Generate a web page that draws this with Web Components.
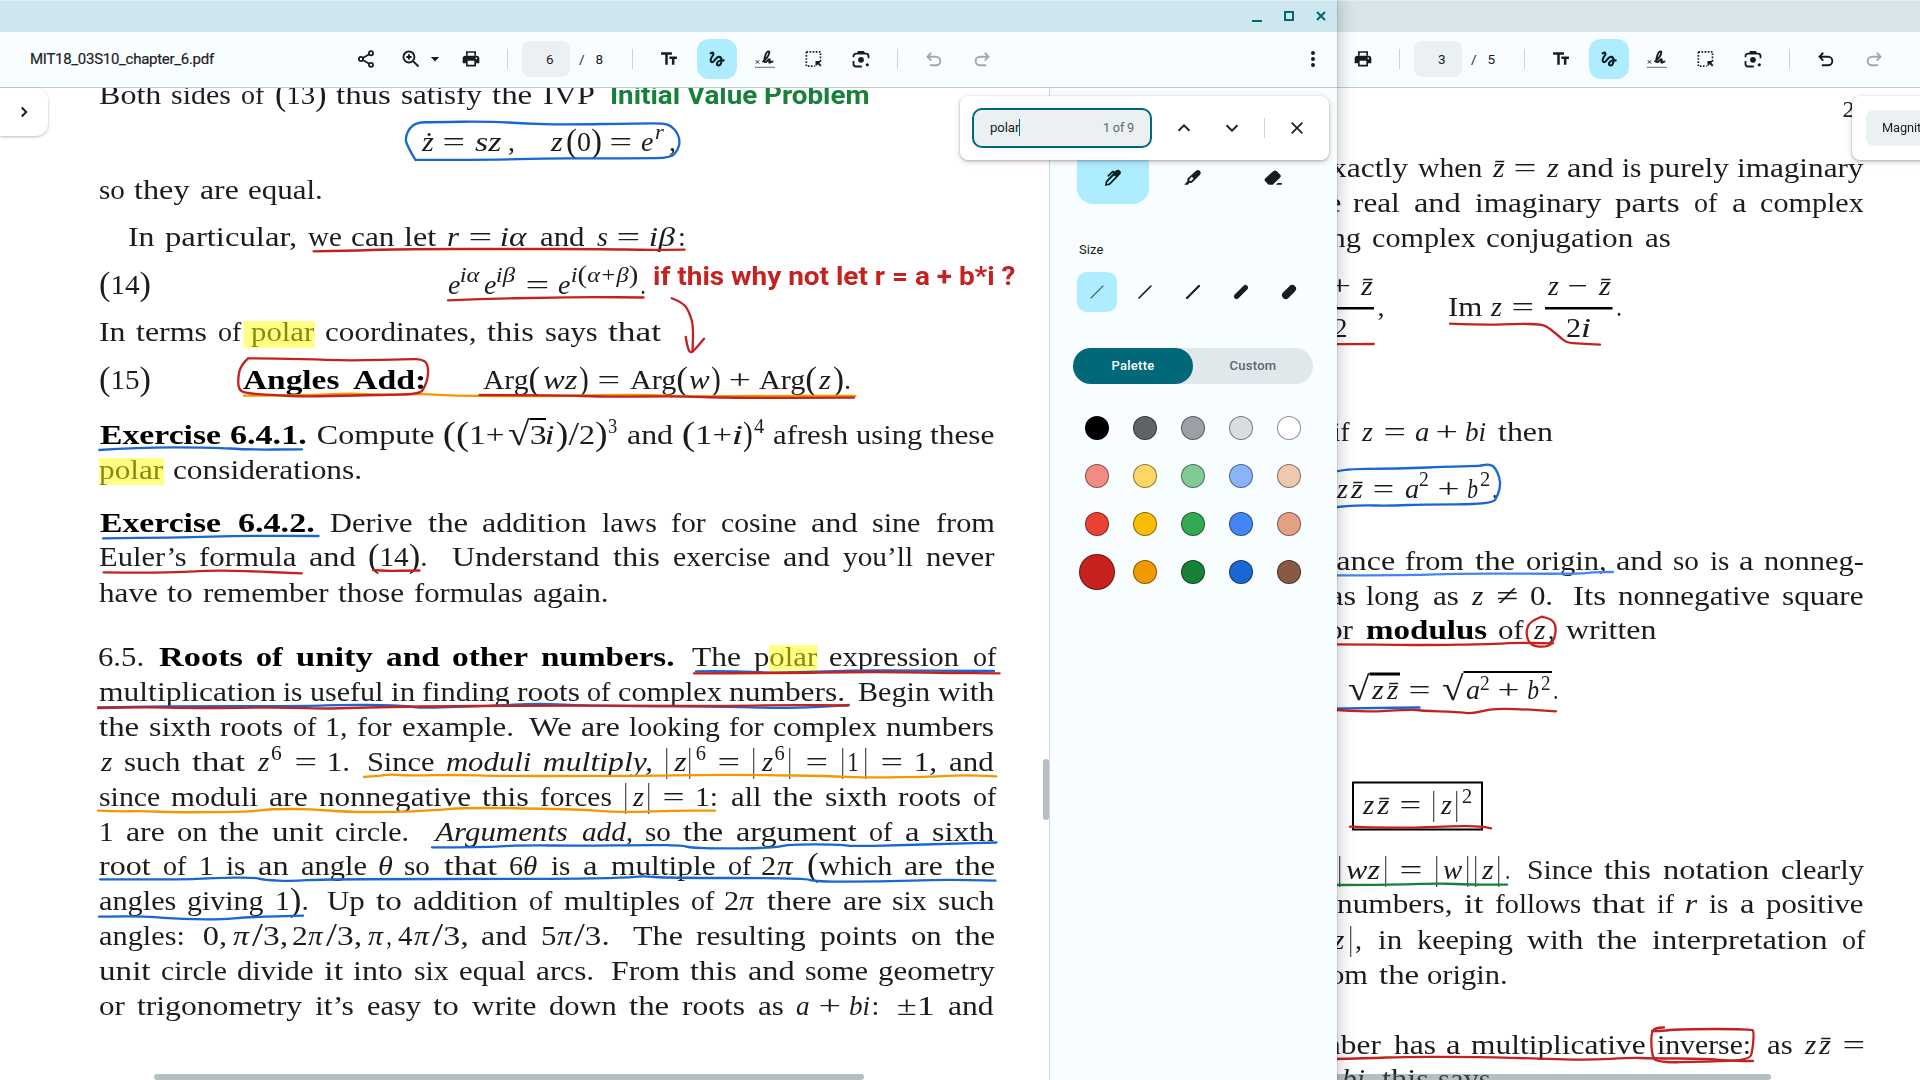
<!DOCTYPE html>
<html lang="en">
<head>
<meta charset="utf-8">
<title>MIT18_03S10_chapter_6.pdf</title>
<style>
html,body{margin:0;height:100%;overflow:hidden;background:#fff}
body{font-family:Roboto,"Liberation Sans",sans-serif;color:#191c1d}
</style>
</head>
<body>
<desk-top></desk-top>
<script>
const define=(name,html,init)=>{
  const t=document.createElement('template');t.innerHTML=html;
  customElements.define(name,class extends HTMLElement{
    connectedCallback(){
      if(this.shadowRoot)return;
      this.attachShadow({mode:'open'}).append(t.content.cloneNode(true));
      if(init)init.call(this,this.shadowRoot);
    }
  });
};

/* ---------- icons ---------- */
const ICONS={
share:'<g fill="none" stroke="currentColor" stroke-width="2.1"><circle cx="18" cy="5" r="2.5"/><circle cx="6" cy="12" r="2.5"/><circle cx="18" cy="19" r="2.5"/><path d="M8.2 10.7 15.8 6.3M8.2 13.3l7.6 4.4"/></g>',
zoom:'<g fill="none" stroke="currentColor" stroke-width="2.3"><circle cx="9.5" cy="9.5" r="6.6"/><path d="M14.2 14.2 21 21M9.5 6.3v6.4M6.3 9.5h6.4"/></g>',
print:'<path d="M19 8H5c-1.66 0-3 1.34-3 3v6h4v4h12v-4h4v-6c0-1.66-1.34-3-3-3zm-3 11H8v-5h8v5zm2.4-6.700c-.6 0-1-.45-1-1s.4-1 1-1 1 .45 1 1-.4 1-1 1z"/><path d="M6 2.600h12V8H6zM8 4.600V8h8V4.600z" fill-rule="evenodd"/>',
text:'<path d="M2.500 4v3h5v12h3V7h5V4h-13zm19 5h-9v3h3v7h3v-7h3V9z"/>',
draw:'<path d="M4.590 6.890c.7-.71 1.400-1.350 1.710-1.220.5.2 0 1.030-.3 1.520-.25.420-2.860 3.890-2.860 6.310 0 1.280.480 2.340 1.340 2.980.750.560 1.740.730 2.640.460 1.070-.310 1.950-1.400 3.060-2.770 1.210-1.490 2.830-3.440 4.080-3.440 1.630 0 1.650 1.010 1.760 1.790-3.780.640-5.380 3.670-5.380 5.370s1.440 3.090 3.210 3.090c1.630 0 4.290-1.330 4.690-6.100H21v-2.500h-2.470c-.150-1.650-1.090-4.200-4.030-4.200-2.250 0-4.180 1.910-4.940 2.840-.580.730-2.060 2.480-2.290 2.720-.250.300-.680.840-1.110.840-.450 0-.720-.830-.360-1.920.350-1.090 1.400-2.860 1.850-3.520.780-1.140 1.300-1.920 1.300-3.280C8.950 3.690 7.310 3 6.440 3 5.120 3 3.970 4 3.720 4.250c-.360.360-.660.660-.880.930l1.750 1.710zm9.290 11.660c-.310 0-.740-.260-.740-.720 0-.600.730-2.200 2.870-2.760-.300 2.690-1.430 3.480-2.130 3.480z"/>',
sign:'<g fill="none" stroke="currentColor"><path d="M1 13.500l4 4M5 13.500l-4 4" stroke-width="1.200"/><path d="M9 15.500c4-3 8.500-8.500 8.200-11.600-.1-1.600-2-1.400-3.300.6-2 3-3.300 8.200-2.500 10.500.7 1.700 2.300.5 3.400-1 1-1.500 2.500-2.300 3-1.300.5 1.200-1.600 2.600-.7 3.500 1 .7 2.500-1.300 4.900-1.300" stroke-width="2.200"/><path d="M.5 22h23" stroke-width="1.500" stroke-dasharray="1.200 1.200"/></g>',
select:'<path d="M4 3.500v17h10" fill="none" stroke="currentColor" stroke-width="2" stroke-dasharray="2 1.750"/><path d="M4 3.500h17v11" fill="none" stroke="currentColor" stroke-width="2" stroke-dasharray="2 1.750"/><path d="M15 14.500h7l-2.400 2.200 2.600 2.700-1.700 1.700-2.700-2.700-2.800 2.500z"/>',
lens:'<g fill="none" stroke="currentColor" stroke-width="2.200"><path d="M3 10V8.500a3 3 0 0 1 3-3h12a3 3 0 0 1 3 3V11"/><path d="M3 14.500V18a3 3 0 0 0 3 3h7"/></g><path d="M8.500 2.500h7l1.500 3H7zM12 9.500a3.500 3.500 0 1 0 0 7 3.500 3.500 0 0 0 0-7z"/><circle cx="19.500" cy="19" r="1.900"/>',
undo:'<path d="M7 19.500h7.500a5 5 0 0 0 0-10.200H5M8.700 4.500 4.200 9.200l4.500 4.700" fill="none" stroke="currentColor" stroke-width="2.300"/>',
redo:'<path d="M17 19.500H9.500a5 5 0 0 1 0-10.200H19M15.300 4.500l4.500 4.700-4.500 4.700" fill="none" stroke="currentColor" stroke-width="2.300"/>',
more:'<circle cx="12" cy="4.900" r="2.400"/><circle cx="12" cy="12" r="2.400"/><circle cx="12" cy="19.100" r="2.400"/>',
caret:'<path d="M2 7h20L12 18z"/>',
right:'<path d="M9 6l6 6-6 6" fill="none" stroke="currentColor" stroke-width="2.600"/>',
up:'<path d="M5.500 15.300 12 8.800l6.500 6.500" fill="none" stroke="currentColor" stroke-width="2.200"/>',
down:'<path d="M5.500 8.700 12 15.200l6.500-6.500" fill="none" stroke="currentColor" stroke-width="2.200"/>',
close:'<path d="M5.600 5.600l12.800 12.800M18.400 5.600 5.600 18.400" fill="none" stroke="currentColor" stroke-width="2"/>',
pen:'<path d="M14.300 3.800 16 2.600c1.400-.9 3-.7 4.200.3 1.400 1.200 1.700 3 .6 4.500L8.300 20.300 3 21.400c-.5.1-.8-.2-.7-.7L3.500 15.500 12.300 6.400l-.6-.6-5.100 4.900L5 9.200l5.500-5.300c.8-.7 1.700-.7 2.400 0zM5.300 16.700l-.6 2.400 2.400-.6 7.900-7.900-1.700-1.700z" fill-rule="evenodd"/>',
marker:'<path d="M15.800 3.200c1.500-1.300 3.300-1 4.500.3 1.300 1.300 1.400 3.100.1 4.500l-8.700 8.900c-1.100 1.100-2.600 1.300-4 .8L5.800 20H1.500l4-4.300c-.6-1.400-.3-2.900.8-4zM8 13.100c-.8.8-.6 1.500 0 2.100s1.400.8 2.100.1l2.600-2.600-2.200-2.200z" fill-rule="evenodd"/>',
eraser:'<path d="M12.300 3.800 2.600 12.500c-1 .9-1 2.200-.1 3.200l3.200 3.500c.4.500 1 .8 1.700.8h4.300l8.900-8.600c1-.9 1-2.300.1-3.300l-4.100-4.200c-1.200-1.100-3-1.200-4.300-.1zM17.500 18h5v2h-7z"/>'
};
define('ui-icon','<style>:host{display:block;width:20px;height:20px;flex:none}svg{display:block;width:100%;height:100%;fill:currentColor}</style><svg viewBox="0 0 24 24"></svg>',function(r){
  r.querySelector('svg').innerHTML=ICONS[this.getAttribute('name')];
});
define('tool-button',`<style>
:host{display:grid;place-items:center;width:40px;height:40px;flex:none;border-radius:12px;color:#191c1d}
:host([active]){background:#aeecff;color:#001f26}
:host([disabled]){color:#a3a9ab}
</style><slot></slot>`);

define('title-bar',`<style>
:host{display:flex;height:32px;box-sizing:border-box;justify-content:flex-end;align-items:center;background:var(--frame);border-top:1px solid #ffffff50}
</style><slot></slot>`);

define('pdf-toolbar',`<style>
:host{display:flex;height:56px;box-sizing:border-box;align-items:center;background:#f8fdff;border-bottom:1px solid #c4cccf;padding-bottom:1px;white-space:nowrap}
.name{width:316px;padding-left:30px;font-size:15px;font-weight:500;letter-spacing:-.28px;font-family:Roboto,sans-serif;color:#1f2325}
.name b{font-weight:400;display:inline-block;-webkit-text-stroke:.2px currentColor}
.sep{width:1px;height:20px;background:#cdd4d7;flex:none}
.page{width:48px;height:36px;border-radius:8px;background:#ebf0f3;flex:none;display:flex;align-items:center;box-sizing:border-box;padding-left:24px;font-size:13.500px}
.of{width:41px;display:flex;gap:11px;padding-left:9px;font-size:13.500px;flex:none}
.caret{width:10px;height:10px}
.m{margin-left:8px}
.grow{flex:1}
</style>
<div class="name"></div>
<tool-button><ui-icon name="share"></ui-icon></tool-button>
<tool-button style="margin-left:5px"><ui-icon name="zoom"></ui-icon></tool-button>
<ui-icon class="caret" name="caret" style="margin-left:-1px"></ui-icon>
<tool-button style="margin-left:11px"><ui-icon name="print"></ui-icon></tool-button>
<div class="sep" style="margin-left:16px"></div>
<div class="page" style="margin-left:14px"></div>
<div class="of"><span>/</span><span class="n"></span></div>
<div class="sep" style="margin-left:12px"></div>
<tool-button style="margin-left:16px"><ui-icon name="text"></ui-icon></tool-button>
<tool-button class="m" active><ui-icon name="draw"></ui-icon></tool-button>
<tool-button class="m"><ui-icon name="sign"></ui-icon></tool-button>
<tool-button class="m"><ui-icon name="select"></ui-icon></tool-button>
<tool-button class="m"><ui-icon name="lens"></ui-icon></tool-button>
<div class="sep" style="margin-left:16px"></div>
<tool-button class="undo" style="margin-left:16px"><ui-icon name="undo"></ui-icon></tool-button>
<tool-button class="m" disabled><ui-icon name="redo"></ui-icon></tool-button>
<div class="grow"></div>
<slot></slot>`,function(r){
  const a=n=>this.getAttribute(n)||'';
  r.querySelector('.name').innerHTML='<b>'+a('name')+'</b>';
  r.querySelector('.page').textContent=a('page');
  r.querySelector('.n').textContent=a('pages');
  if(this.hasAttribute('clean'))r.querySelector('.undo').setAttribute('disabled','');
});

define('find-bar',`<style>
:host{display:flex;align-items:center;box-sizing:border-box;width:369px;height:64px;padding-left:12px;background:#fff;border-radius:8px;box-shadow:0 1px 3px #0004,0 2px 6px 1px #0000001c;font-size:13.200px;letter-spacing:-.1px;white-space:nowrap}
.field{display:flex;align-items:center;box-sizing:border-box;width:180px;height:40px;border:2px solid #00687a;border-radius:10px;background:#ebf0f3;padding:0 16px 1px}
:host([idle]) .field{border-color:transparent;background-clip:padding-box;border-radius:10px}
:host([idle]){font-size:12.800px}
.cur{width:1px;height:17px;background:#00687a}
:host([idle]) .cur{display:none}
.count{margin-left:auto;color:#5b696e;font-size:12.700px;letter-spacing:-.2px}
.sep{width:1px;height:20px;background:#cdd4d7;margin-left:22px}
</style><div class="field"><slot></slot><span class="cur"></span><span class="count"></span></div>
<ui-icon name="up" style="margin-left:22px"></ui-icon><ui-icon name="down" style="margin-left:28px"></ui-icon><div class="sep"></div><ui-icon name="close" style="margin-left:22px"></ui-icon>`,function(r){
  r.querySelector('.count').textContent=this.getAttribute('count')||'';
});

/* ---------- annotation side panel ---------- */
define('ink-panel',`<style>
:host{display:flex;flex-direction:column;box-sizing:border-box;width:288px;flex:none;border-left:1px solid #d0d8db;background:#f8fdff;padding:60px 0 0 27px}
.tools{display:flex;gap:8px}
.tools div{width:72px;height:56px;border-radius:16px;display:flex;justify-content:center;align-items:center;padding-top:3px;box-sizing:border-box}
.tools div:first-child{background:#aeecff;color:#001f26}
h4{margin:37px 0 0 2px;font:400 13px/18px Roboto,sans-serif;letter-spacing:.1px}
.sizes{display:flex;gap:8px;margin-top:13px}
.sizes svg{width:40px;height:40px;border-radius:10px;display:block;stroke:#191c1d;stroke-linecap:round}
.sizes svg:first-child{background:#aeecff;stroke:#3c626c}
.seg{display:flex;width:240px;height:36px;margin:36px 0 0 -4px;border-radius:18px;background:#e1e8eb;font:500 13px/36px Roboto,sans-serif;color:#566970;letter-spacing:.25px}
.seg span{flex:1;text-align:center}
.seg span:first-child{background:#006879;color:#fff;border-radius:18px}
.pal{display:grid;grid-template-columns:repeat(5,40px);grid-auto-rows:40px;gap:8px;margin-top:24px}
.pal i{width:24px;height:24px;box-sizing:border-box;border-radius:50%;border:1px solid #00000070;place-self:center}
.pal i.on{width:36px;height:36px}
</style>
<div class="tools"><div><ui-icon name="pen"></ui-icon></div><div><ui-icon name="marker"></ui-icon></div><div><ui-icon name="eraser"></ui-icon></div></div>
<h4>Size</h4><div class="sizes"></div>
<div class="seg"><span>Palette</span><span>Custom</span></div>
<div class="pal"></div>`,function(r){
  r.querySelector('.sizes').innerHTML=[1.100,1.600,2.200,5.200,7.500].map((w,i)=>{const p=w>4?w/2-1:0;return `<svg viewBox="0 0 40 40"><path d="M${14+p} ${26-p}L${26-p} ${14+p}" stroke-width="${w}"/></svg>`}).join('');
  r.querySelector('.pal').innerHTML='#000 #5f6368 #9aa0a6 #dadce0 #fff #f28b82 #fdd663 #81c995 #8ab4f8 #eec9ae #ea4335 #fbbc04 #34a853 #4285f4 #e2a185 #c5221f #f29900 #188038 #1967d2 #885945'.split(' ').map((c,i)=>`<i${i==15?' class="on"':''} style="background:${c}"></i>`).join('');
});

/* ---------- typeset page ----------
   A page is a list of lines [baseline, runs]; a run is [x0, x1, text, style, dy].
   One-word runs are stretched so that their ink fills x0..x1; longer runs are
   justified, each word having the width that the roman font metrics give it. */
const CW={};
'a.5 b.556 c.444 d.556 e.444 f.306 g.5 h.556 i.278 j.306 k.528 l.278 m.833 n.556 o.5 p.556 q.528 r.392 s.394 t.389 u.556 v.528 w.722 x.528 y.528 z.444 A.75 B.708 C.722 D.764 E.681 F.653 G.785 I.361 P.681 R.736 S.556 T.722 U.75 V.75 W1.028 (.389 ).389 ,.278 :.278 \u2019.278 -.333'.split(' ').forEach(t=>CW[t[0]]=parseFloat(t.slice(1)));
CW['.']=.278;
const EM=28.970,SIZE=28,ctx=document.createElement('canvas').getContext('2d');
const fontOf=(st,sz)=>`${/i/.test(st)?'italic ':''}${/b/.test(st)?'bold ':''}${sz}px "Liberation Serif"`;
function measure(text,st){
  const base=/s/.test(st)?20.500:/r/.test(st)?34:/t/.test(st)?24:SIZE;
  const parts=text.split(/([()|\/])/).filter(Boolean).map(t=>({t,sz:/^[()|\/]$/.test(t)?base*1.180:base}));
  let adv=0,l=0,rr=0,h='';
  parts.forEach((p,i)=>{
    const slanted=/i/.test(st)&&!/^[()|\/]$/.test(p.t);
    ctx.font=fontOf(slanted?st:st.replace('i',''),p.sz);
    const m=ctx.measureText(p.t);
    if(!i)l=-m.actualBoundingBoxLeft;
    rr=adv+m.actualBoundingBoxRight;adv+=m.width;
    h+=p.sz===base?p.t:`<span class="d">${p.t}</span>`;
  });
  return{adv,l,r:rr,base,h};
}
define('pdf-page',`<style>
:host{display:block;position:relative;flex:1;min-width:0;background:#fff;overflow:hidden;color:#1c1c1c;font:28px/34px "Liberation Serif",serif}
.text{will-change:transform}
.line{display:flex;height:34px}
.run{flex:none;height:34px;white-space:nowrap;text-align-last:justify}
.w{display:inline-block;line-height:0;transform-origin:0 0;text-align-last:left}
.d{font-size:1.180em;font-style:normal;vertical-align:-.04em}
.i{font-style:italic}.b{font-weight:700;color:#000}
svg{position:absolute;left:0;top:0;width:100%;height:100%;overflow:hidden}
.ink{fill:none;stroke-width:2.300;stroke-linecap:round;stroke-linejoin:round}
.note{position:absolute;font:700 26px/30px Roboto,sans-serif;white-space:nowrap;transform-origin:0 0}
.bar{position:absolute;background:#5c6c7270;border-radius:3px}
</style><div class="text"></div>`,function(r){
  const P=PAGES[this.getAttribute('doc')],ox=P.x,oy=88,box=r.querySelector('.text');
  let y=oy,html='';
  for(const[b,runs]of P.lines){
    const top=b-26;let x=ox;
    html+=`<div class="line" style="margin-top:${top-y}px">`;y=top+34;
    for(const[a,c,text,st='',dy=0]of runs){
      const words=text.split(' ');let x0=a,x1=c,inner;
      if(words.length===1){
        const m=measure(text,st),k=(x1-x0)/(m.r-m.l);
        inner=`<span class="w" style="width:${m.adv}px;margin-right:${-m.adv}px;font-size:${m.base}px;transform:translate(${-m.l*k}px,${dy}px) scaleX(${k})">${m.h}</span>`;
      }else{
        x0-=.700;x1+=.400;
        inner=words.map(w=>{
          const m=measure(w,st);let cw=0;
          for(const ch of w)cw+=CW[ch]||.5;
          cw*=EM*(/b/.test(st)?1.150:/i/.test(st)?1.020:1);
          return`<span class="w" style="width:${cw}px;transform:scaleX(${cw/m.adv})">${m.h}</span>`;
        }).join(' ');
      }
      html+=`<div class="run ${/i/.test(st)?'i':''} ${/b/.test(st)?'b':''}" style="margin-left:${x0-x}px;width:${x1-x0}px">${inner}</div>`;
      x=x1;
    }
    html+='</div>';
  }
  box.innerHTML=html;
  const C={r:'#c5221f',b:'#1967d2',o:'#f29900',g:'#188038',l:'#4285f4'};
  let s=`<svg><g transform="translate(${-ox} ${-oy})">`;
  for(const[x,y,w,h]of P.rules||[])s+=`<rect x="${x}" y="${y}" width="${w}" height="${h}" fill="#000"/>`;
  for(const[x,y,w,h]of P.boxes||[])s+=`<rect x="${x}" y="${y}" width="${w}" height="${h}" fill="none" stroke="#000" stroke-width="2"/>`;
  for(const[x,y,w,h]of P.marks||[])s+=`<rect x="${x}" y="${y}" width="${w}" height="${h}" fill="#ff0" fill-opacity=".48"/>`;
  for(const[c,pts]of P.ink){
    const p=pts.trim().split(/\s+/).map(q=>q.split(',').map(Number));
    let d='M'+p[0];
    for(let i=1;i<p.length-1;i++)d+=`Q${p[i]} ${(p[i][0]+p[i+1][0])/2},${(p[i][1]+p[i+1][1])/2}`;
    d+='L'+p[p.length-1];
    s+=`<path class="ink" stroke="${C[c]}" d="${d}"/>`;
  }
  box.insertAdjacentHTML('afterend',s+'</g></svg>');
  for(const[a,c,b,color,text]of P.notes||[]){
    ctx.font='700 26px Roboto';const k=(c-a)/ctx.measureText(text).width;
    box.insertAdjacentHTML('afterend',`<div class="note" style="left:${a-ox}px;top:${b-oy-24}px;color:${color};transform:scaleX(${k})">${text}</div>`);
  }
  for(const[x,y,w,h]of P.bars)r.lastElementChild.insertAdjacentHTML('afterend',`<div class="bar" style="left:${x-ox}px;top:${y-oy}px;width:${w}px;height:${h}px"></div>`);
});

const bar=c=>[c-.900,c+.900,'|'];
const PAGES={
left:{x:0,lines:[
[104,[[99.500,594,'Both sides of (13) thus satisfy the IVP']]],
[151,[[421,434,'ż','i'],[444,464,'='],[474.500,501,'sz','i'],[509,514,','],[550,563,'z','i'],[567,601,'(0)'],[611,631,'='],[641,653,'e','i'],[655,665,'r','is',-12],[670,675,',']]],
[199,[[99.500,322.500,'so they are equal.']]],
[246,[[129,297,'In particular,'],[309,436,'we can let'],[448,459,'r','i'],[470,491,'='],[501,528,'iα','i'],[540,584.500,'and'],[597,608,'s','i'],[618,639,'='],[650,675,'iβ','i'],[680,684,':']]],
[294,[[100,150,'(14)'],[448,460,'e','i'],[461,481,'iα','is',-12],[484,496,'e','i'],[497,516,'iβ','is',-12],[527,548,'='],[558,570,'e','i'],[571.500,636.500,'i(α+β)','is',-12],[641,645,'.']]],
[341,[[99.500,241,'In terms of'],[251,315,'polar'],[326,661,'coordinates, this says that']]],
[389,[[100,150,'(15)'],[242.500,339,'Angles','b'],[352.500,423,'Add:','b'],[483,539,'Arg('],[543,577.500,'wz','i'],[580,588,')'],[599,619,'='],[630,687,'Arg('],[689,710,'w','i'],[712,720,')'],[730,750,'+'],[759,816,'Arg('],[818,831,'z','i'],[834,850,').']]],
[444,[[99.500,220,'Exercise','b'],[229.500,305,'6.4.1.','b'],[318,434,'Compute'],[444,503.500,'((1+'],[508,530,'√','r',1],[531,545.500,'3'],[546,553.500,'i','i'],[556.500,606,')/2)'],[608,617,'3','s',-11],[627,673,'and'],[683,731,'(1+'],[733,742,'i','i'],[744,752,')'],[754,764,'4','s',-11],[773.500,994.500,'afresh using these']]],
[479,[[99,164,'polar'],[174,361,'considerations.']]],
[532,[[99.500,220,'Exercise','b'],[237.500,313,'6.4.2.','b'],[331,994,'Derive the addition laws for cosine and sine from']]],
[566,[[99.500,427,'Euler’s formula and (14).'],[453,994,'Understand this exercise and you’ll never']]],
[602,[[99.500,608,'have to remember those formulas again.']]],
[666,[[99,143,'6.5.'],[160,674.500,'Roots of unity and other numbers.','b'],[692.500,741,'The'],[753.600,817.500,'polar'],[829.600,996,'expression of']]],
[701,[[99.500,844.600,'multiplication is useful in finding roots of complex numbers.'],[859,994,'Begin with']]],
[736,[[99.500,513,'the sixth roots of 1, for example.'],[530,994,'We are looking for complex numbers']]],
[771,[[100,112.500,'z','i'],[125,245,'such that'],[257.500,270,'z','i'],[271.500,282,'6','s',-11],[296,316,'='],[329,349,'1.'],[368,434,'Since'],[447.500,531,'moduli','i'],[543.600,651.400,'multiply,','i'],bar(667),[673,686.500,'z','i'],bar(690),[695.700,705.700,'6','s',-11],[719,739,'='],bar(754),[760.700,773,'z','i'],[774.600,784.600,'6','s',-11],bar(790),[807,827,'='],bar(843),[849.500,858.500,'1'],bar(866),[882,902,'='],[916,936,'1,'],[949,993.600,'and']]],
[806,[[99.500,611.500,'since moduli are nonnegative this forces'],bar(626),[632,644,'z','i'],bar(649),[664,683.600,'='],[697,716,'1:'],[732,995.500,'all the sixth roots of']]],
[841,[[100,409,'1 are on the unit circle.'],[433,568,'Arguments','i'],[582,632,'add,','i'],[645.500,994,'so the argument of a sixth']]],
[875,[[99.500,367,'root of 1 is an angle'],[379,393,'θ','i'],[405,496.500,'so that'],[510,523,'6'],[524,537.500,'θ','i'],[551.500,751,'is a multiple of'],[762,775,'2'],[777,793.600,'π','i'],[808,994.600,'(which are the']]],
[910,[[99.500,308,'angles giving 1).'],[327.500,714,'Up to addition of multiples of'],[724.600,737.600,'2'],[739.500,755,'π','i'],[768,994,'there are six such']]],
[945,[[99,183,'angles:'],[204,226,'0,'],[233,250,'π','i'],[251.500,286.500,'/3,'],[293,306.500,'2'],[308,323.500,'π','i'],[326,361,'/3,'],[368,384,'π','i'],[387,391,','],[398,412.500,'4'],[413.500,429.500,'π','i'],[431.500,467,'/3,'],[481,527,'and'],[541.800,555,'5'],[557,573,'π','i'],[574.500,609,'/3.'],[633.600,994.600,'The resulting points on the']]],
[980,[[99.500,593.600,'unit circle divide it into six equal arcs.'],[612,994,'From this and some geometry']]],
[1015,[[99.500,783,'or trigonometry it’s easy to write down the roots as'],[796,808.600,'a','i'],[820,840,'+'],[849.600,869,'bi','i'],[873.500,877.500,':'],[898,933.600,'±1'],[948,993.600,'and']]]
],
rules:[[529.500,418,16.500,2]],
marks:[[243.500,321,71.500,27],[99,458,65,27],[769,645,48.500,27]],
notes:[[610,869.500,104,'#188038','Initial Value Problem'],[652.500,1015,285,'#c5221f','if this why not let r = a + b*i ?']],
bars:[[154,1074,710,6],[1043,759,6,61]],
ink:[
['b','415.5,160 406.5,145 405.5,137 409.5,128 417,122.5 433,122 490,121.5 526.5,123.5 563,124.7 640,123.3 664,123.3 671,126 677,132 680,141 678,150 671,158 640,158.3 590,158.3 545,158.5 490,159.8 415.5,159.8'],
['r','313.5,251.3 347,251 396,249 510,249 607,249 643,250 684.6,249.7'],
['r','448,300.3 481.6,298.8 547,297.7 589,297 643.6,297.5'],
['r','671.8,298.3 684,303 690,314 693,325 693,338 692.5,351.7'],
['r','685.7,337 687,345 689.6,352.6 693,351.5 698,346 704,338.7'],
['o','244,395.7 303.6,395.3 352,393.3 378.6,395 423,393.7 457,396 560,396 600,395 650,394.7 686,396.7 732,396 855.5,396'],
['r','248,358.3 241,365 238,376.7 238.6,390 246.5,393.3 271,395 303.6,396.5 332,396 378.6,395 419.6,394.3 425,386.7 428.5,375 427.5,363.3 421.5,359.3 411,359 350,360.7 303.6,359 248,358.3'],
['r','479.6,395 560,395 607,397 678.6,396 728.6,398 854,397.7'],
['b','99.3,450 135.7,447.3 214,447.3 246.5,449.7 302,449.3'],
['b','103,538.3 178.6,537.7 243,535.7 318.6,536'],
['r','103.6,572.3 161,573 207,570.7 235.7,570.7 301.8,573.3'],
['r','373,570 380,571 419.6,570.5'],
['b','696,671.3 733,671 772,673 826,671.3 861.4,670.3 994,671'],
['r','694,673.3 790,673 851,672 897,672 951,673 999.6,673.3'],
['b','98,707.3 168,706.3 311,706 339,704.7 396.5,705 421.5,708 446.5,707.3 511,705 539,703.5 561.5,704.7 611,706 736,706.7 768.6,708 808,707.7 849,705'],
['r','98,708 143,707 193,708.3 286,707.3 325,709 393,706.5 560,705.5 647,705.7 740,706 790,704.9 848,705.5'],
['o','364,777 378.6,776 389,774.3 411,775.7 457,774.7 500,776 575.7,776 647,775.7 700.7,774.9 761,775 825.7,776 868.6,777.7 933,776.7 961,774.9 996.4,776.3'],
['o','98,810.7 118,811.5 143,811 178.6,812.5 250,811.7 271,809 311,809 346,812 396,812 428.6,810.7 468,807.5 560,809 586,810 611,811.7 636,812 672,810.7 715,810.7'],
['b','432,847.3 482,847.3 518,845.3 583,845.7 647,845 683,845.3 690,848 743.6,848.7 775.7,847.3 790,844.3 840,844.3 850.7,846.3 897,845.3 950.7,843.7 996.4,842.5'],
['b','100,879.3 178.6,879.7 214,878 253.6,877.3 264,880 293,881.3 321.4,879 560,879 625.7,877.7 643.6,876 665,878 804,878 815,881.7 879,881.7 943.6,879.5 995.4,880.7'],
['b','99,916.7 139,915.7 171.4,918.7 218,919.7 250,917 303,915.7']
]},
right:{x:892,lines:[
[117,[[1843.500,1853.500,'2','t']]],
[177,[[1318,1408,'exactly'],[1418,1482.400,'when'],[1492.400,1505,'z̄','i'],[1514.600,1535,'='],[1546,1559,'z','i'],[1567.500,1863.500,'and is purely imaginary']]],
[212,[[1301,1341,'the'],[1353.500,1863.500,'real and imaginary parts of a complex']]],
[247,[[1295,1361,'using'],[1372.600,1670,'complex conjugation as']]],
[316,[[1330,1350,'+','',-21],[1360,1373,'z̄','i',-21],[1378.500,1383.500,','],[1448.500,1482,'Im'],[1490,1502,'z','i'],[1513,1533,'='],[1547,1559,'z','i',-21],[1569,1587,'−','',-21],[1598,1611,'z̄','i',-21],[1617,1621,'.']]],
[337+14,[[1334.500,1346.500,'2','',-14],[1567,1580,'2','',-14],[1582,1590,'i','i',-14]]],
[441,[[1332.600,1350,'if'],[1361,1373,'z','i'],[1384.600,1404.500,'='],[1414.700,1428,'a','i'],[1437,1457,'+'],[1466,1485.400,'bi','i'],[1498,1553,'then']]],
[498,[[1336,1348,'z','i'],[1350,1363,'z̄','i'],[1374,1393,'='],[1404.500,1417.700,'a','i'],[1419,1428.600,'2','s',-12],[1439,1458.700,'+'],[1468,1478,'b','i'],[1480,1490,'2','s',-12],[1493.500,1497,'.']]],
[570,[[1291,1394.700,'distance'],[1406,1606,'from the origin,'],[1617,1863.500,'and so is a nonneg-']]],
[605,[[1328.500,1354.500,'as'],[1367,1458,'long as'],[1471,1483.500,'z','i'],[1498,1518,'≠'],[1531,1552,'0.'],[1573.500,1863.600,'Its nonnegative square']]],
[639,[[1328,1353.700,'or'],[1365.700,1487,'modulus','b'],[1498.600,1524,'of'],[1533,1545.600,'z','i'],[1549,1553.500,','],[1566,1656.500,'written']]],
[699,[[1348,1370,'√','r',1],[1371,1384,'z','i'],[1386,1398.500,'z̄','i'],[1410,1429.500,'='],[1442,1464,'√','r',1],[1465.500,1478.600,'a','i'],[1480,1489.500,'2','s',-9],[1499,1518.500,'+'],[1528,1539,'b','i'],[1540.700,1550,'2','s',-9],[1554,1557.600,'.']]],
[814,[[1362,1374.400,'z','i'],[1376,1389.500,'z̄','i'],[1400.700,1420,'='],bar(1434),[1440,1452,'z','i'],bar(1457),[1462,1472,'2','s',-11]]],
[879,[bar(1340),[1346,1380,'wz','i'],bar(1386),[1400.700,1421,'='],bar(1437),[1443,1462.500,'w','i'],bar(1467.700),bar(1475.500),[1481,1493.700,'z','i'],bar(1499),[1506,1509.500,'.'],[1527.500,1863.600,'Since this notation clearly']]],
[913,[[1337,1451.500,'numbers,'],[1464.700,1673.500,'it follows that if'],[1685.600,1697,'r','i'],[1710,1863.600,'is a positive']]],
[949,[[1332,1344.500,'z','i'],bar(1350.700),[1356,1361,','],[1379,1864.500,'in keeping with the interpretation of']]],
[984,[[1308.600,1367.600,'from'],[1379.700,1507.600,'the origin.']]],
[1054,[[1285,1381.600,'number'],[1394.700,1645,'has a multiplicative'],[1656.600,1748.800,'inverse:'],[1767,1791.700,'as'],[1804,1816.500,'z','i'],[1818,1831,'z̄','i'],[1843.600,1863.600,'=']]],
[1088,[[1343,1364,'bi','i'],[1370,1375,','],[1382.700,1490,'this says']]]
],
rules:[[1300,307,74,2.500],[1545,307,67.500,2.500],[1369.500,672.500,30.500,3],[1463.500,671,88.500,2]],
boxes:[[1353,782.500,129,47]],
bars:[[1330,1074,441,6]],
ink:[
['r','1300,344 1340,344.3 1373.7,344'],
['r','1450,323.7 1485,325 1520,323.7 1540,324.3 1547,326.5 1560,337 1566,342.5 1580,343.7 1600,344.7'],
['b','1330,474 1337,469 1398,468.7 1458,466.3 1480.5,466 1486,464.3 1493,465.3 1497.4,471.7 1501,483.3 1498,495 1492.5,504.3 1420,504.3 1394,505.7 1356,505.3 1337.5,507'],
['l','1330,575.3 1413,575.3 1458,573.3 1578,574 1593,572.3 1613,572'],
['r','1330,644.3 1386,644.3 1420,645.3 1495.6,644 1514,642.7 1553,643.3'],
['r','1541.5,616.7 1531,620.7 1526,630 1528,641.7 1535,646.7 1549,646.7 1554.6,639 1556.2,626.7 1552,619.3 1541.5,616.7'],
['b','1330,708.7 1371,708 1419.6,707.5'],
['r','1330,709.5 1360,712.3 1413,709.3 1420,710.7 1458,712 1473,713.7 1492,708.7 1518,709 1556,711.3'],
['r','1350,826.7 1371,827.7 1416.5,827.7 1454,826 1482,826.3 1491,828.3'],
['g','1330,885 1382.7,885 1443,883.3 1469,884.7 1507,884.7'],
['r','1330,1059 1367.6,1058.3 1405,1056.7 1480.5,1057 1540.7,1058.7 1589.6,1060 1631,1057.7 1650,1058.3 1706,1058.7 1732.6,1061 1753,1061'],
['r','1664,1027.5 1655,1027.3 1651,1034 1651.7,1053.3 1655.5,1062.7 1706,1061.7 1749.6,1060 1752.6,1050 1754,1031.7 1751.4,1029 1680,1029 1661,1031 1652,1031']
]}};

define('desk-top',`<style>
:host{display:block;position:relative;width:1920px;height:1080px;overflow:hidden;background:#fff}
.win{position:absolute;top:0;height:1080px;display:flex;flex-direction:column;overflow:hidden;background:#fff}
.back{left:892px;width:1028px;--frame:#d7e4e9}
.front{left:0;width:1337px;--frame:#cee7ee;box-shadow:0 0 0 1px #0000001a,0 2px 16px 2px #00000038}
.body{flex:1;display:flex;min-height:0}
find-bar{position:absolute;top:96px}
.tab{position:absolute;left:0;top:88px;width:48px;height:48px;box-sizing:border-box;padding-right:10px;background:#fff;border-radius:0 12px 12px 0;box-shadow:0 1px 3px #0004;display:flex;align-items:center;justify-content:flex-end}
.ctl{width:86px;height:24px;display:block;stroke:#00687a;stroke-width:2;fill:none}
</style>
<div class="win back">
<title-bar></title-bar>
<pdf-toolbar page="3" pages="5"></pdf-toolbar>
<div class="body"><pdf-page doc="right"></pdf-page></div>
<find-bar idle style="left:960px">Magnitude</find-bar>
</div>
<div class="win front">
<title-bar><svg class="ctl" viewBox="0 0 86 24"><path d="M1 16h10M66 7l8 8M74 7l-8 8"/><path d="M34 7h8v8h-8z"/></svg></title-bar>
<pdf-toolbar name="MIT18_03S10_chapter_6.pdf" page="6" pages="8" clean><tool-button style="margin-right:4px"><ui-icon name="more"></ui-icon></tool-button></pdf-toolbar>
<div class="body"><pdf-page doc="left"></pdf-page><ink-panel></ink-panel></div>
<div class="tab"><ui-icon name="right" style="width:18px;height:18px;margin-right:5px"></ui-icon></div>
<find-bar count="1 of 9" style="left:960px">polar</find-bar>
</div>`);
</script>
</body>
</html>
